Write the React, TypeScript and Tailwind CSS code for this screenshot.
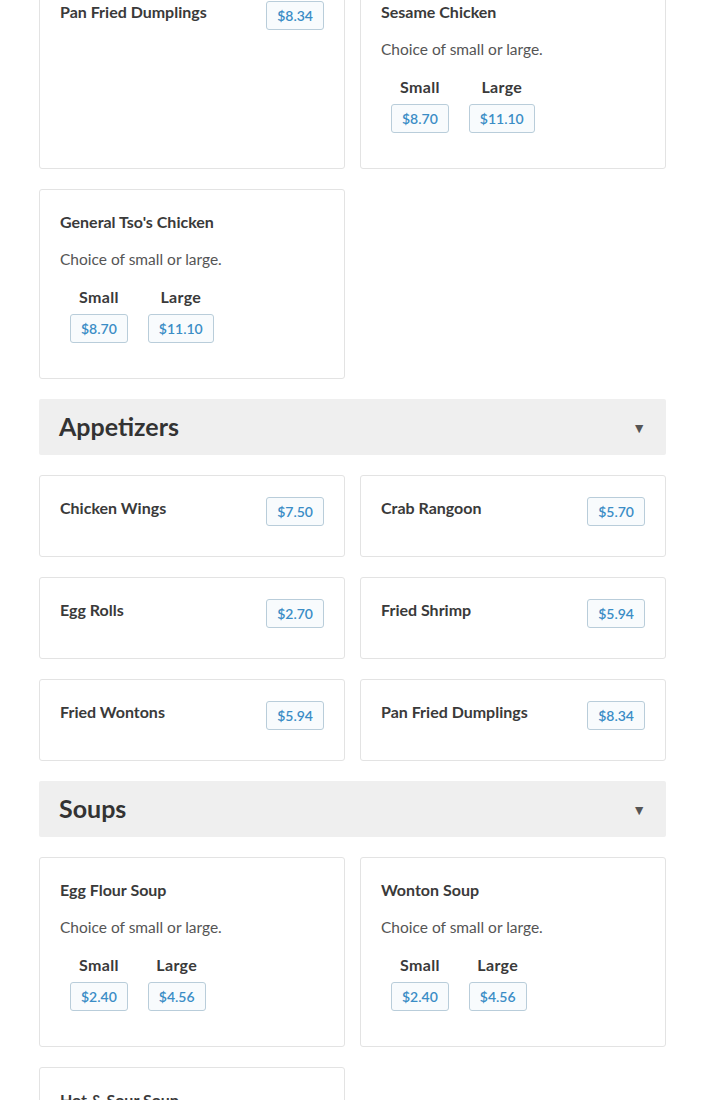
import React from "react";

type Item = { name: string; price?: string; sizes?: { label: string; price: string }[] };

const FONT = { fontFamily: "Lato, 'Open Sans', sans-serif" };

function Badge({ price }: { price: string }) {
  return (
    <div className="h-[29px] px-[10px] flex items-center justify-center rounded-[3px] border border-[#b9cdda] bg-[#f8fbfd] text-[14px] font-semibold text-[#3b8dc6] whitespace-nowrap">
      {price}
    </div>
  );
}

function Card({ item }: { item: Item }) {
  if (item.sizes) {
    return (
      <div className="border border-[#e3e3e3] rounded-[3px] bg-white px-5 pt-5 pb-5">
        <div className="text-[16px] leading-[23px] font-bold text-[#3a3a3a]">{item.name}</div>
        <div className="mt-[14px] text-[15.5px] leading-[24px] text-[#555]">Choice of small or large.</div>
        <div className="mt-[16px] mb-[15px] flex">
          {item.sizes.map((s) => (
            <div key={s.label} className="mx-[10px] flex flex-col items-center">
              <div className="text-[16px] leading-[20px] font-bold text-[#3a3a3a] tracking-[0.3px]">{s.label}</div>
              <div className="mt-[7px]">
                <Badge price={s.price} />
              </div>
            </div>
          ))}
        </div>
      </div>
    );
  }
  return (
    <div className="border border-[#e3e3e3] rounded-[3px] bg-white px-5 pt-5 pb-5">
      <div className="flex justify-between items-start pb-[10px]">
        <div className="text-[16px] leading-[24px] font-bold text-[#3a3a3a]">{item.name}</div>
        <div className="mt-[1px]">
          <Badge price={item.price!} />
        </div>
      </div>
    </div>
  );
}

function Grid({ items }: { items: Item[] }) {
  return (
    <div className="grid grid-cols-2 gap-x-[15px] gap-y-[20px]">
      {items.map((it, i) => (
        <Card key={i} item={it} />
      ))}
    </div>
  );
}

function Header({ title }: { title: string }) {
  return (
    <div className="h-[56px] bg-[#efefef] rounded-[2px] flex items-center justify-between px-5">
      <div className="text-[25px] font-bold text-[#333]">{title}</div>
      <div className="text-[14px] leading-none text-[#555] pt-[2px]">▼</div>
    </div>
  );
}

export default function App() {
  const sm = (a: string, b: string) => [
    { label: "Small", price: a },
    { label: "Large", price: b },
  ];
  return (
    <div className="bg-white h-[1100px] overflow-hidden" style={FONT}>
      <div className="w-[627px] mx-auto -mt-[21px] flex flex-col gap-[20px]">
        <Grid
          items={[
            { name: "Pan Fried Dumplings", price: "$8.34" },
            { name: "Sesame Chicken", sizes: sm("$8.70", "$11.10") },
            { name: "General Tso's Chicken", sizes: sm("$8.70", "$11.10") },
          ]}
        />
        <Header title="Appetizers" />
        <Grid
          items={[
            { name: "Chicken Wings", price: "$7.50" },
            { name: "Crab Rangoon", price: "$5.70" },
            { name: "Egg Rolls", price: "$2.70" },
            { name: "Fried Shrimp", price: "$5.94" },
            { name: "Fried Wontons", price: "$5.94" },
            { name: "Pan Fried Dumplings", price: "$8.34" },
          ]}
        />
        <Header title="Soups" />
        <Grid
          items={[
            { name: "Egg Flour Soup", sizes: sm("$2.40", "$4.56") },
            { name: "Wonton Soup", sizes: sm("$2.40", "$4.56") },
            { name: "Hot & Sour Soup", sizes: sm("$2.40", "$4.56") },
          ]}
        />
      </div>
    </div>
  );
}
